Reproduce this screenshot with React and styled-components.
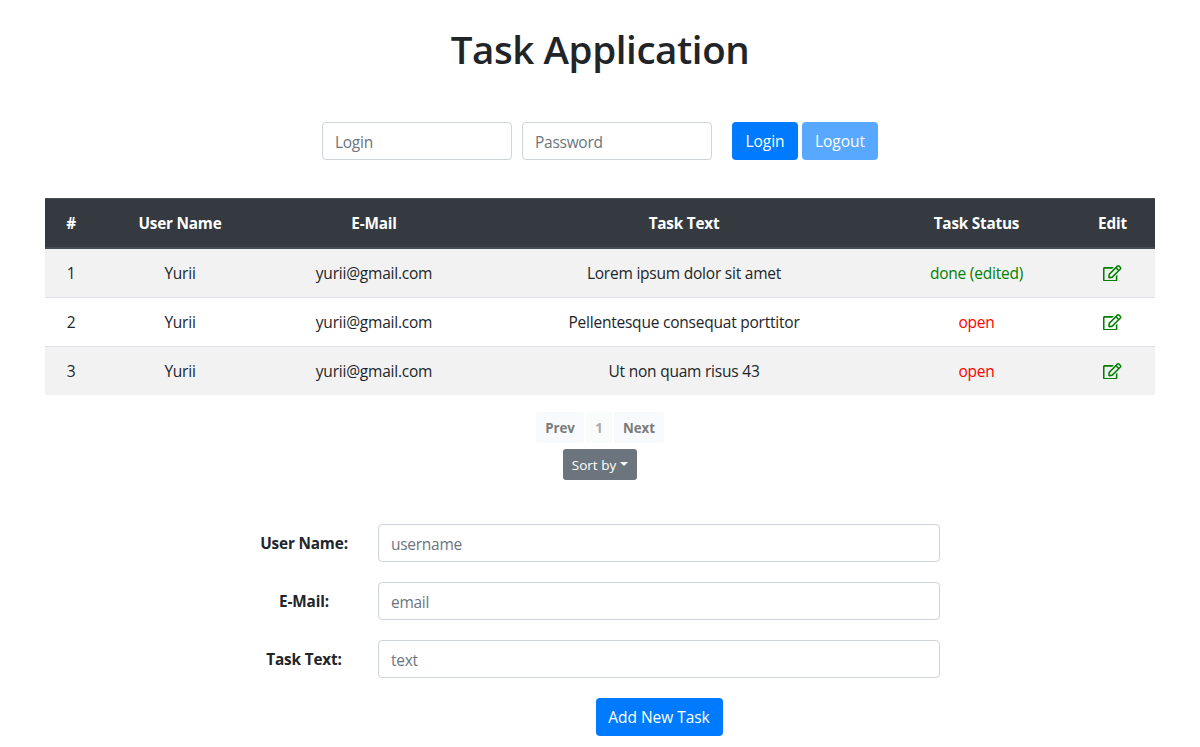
import React from "react";
import styled, { createGlobalStyle } from "styled-components";
import { FaRegEdit } from "react-icons/fa";

const GlobalStyle = createGlobalStyle`
  *, *::before, *::after { box-sizing: border-box; }
  body {
    margin: 0;
    background: #fff;
    color: #212529;
    font-family: "Segoe UI", "Open Sans", "Noto Sans", sans-serif;
    font-size: 15.5px;
    line-height: 24px;
    letter-spacing: -0.22px;
    overflow: hidden;
  }
`;

const Page = styled.main`
  width: 1110px;
  margin: 0 auto;
  padding-top: 25px;
`;

const Title = styled.h1`
  margin: 0 0 49px;
  font-size: 38.5px;
  font-weight: 600;
  line-height: 48px;
  letter-spacing: -0.4px;
  text-align: center;
`;

const Input = styled.input`
  width: ${(p) => p.$width};
  height: 38px;
  padding: 2px 12px 0;
  border: 1px solid #ced4da;
  border-radius: 4px;
  background: #fff;
  color: #495057;
  font: inherit;
  letter-spacing: -0.27px;
  &::placeholder { color: #6c757d; opacity: 1; }
`;

const Button = styled.button`
  width: ${(p) => p.$width}px;
  height: 38px;
  padding: 0;
  border: 0;
  border-radius: 4px;
  background: #007bff;
  color: #fff;
  font: inherit;
  letter-spacing: -0.05px;
  white-space: nowrap;
  opacity: ${(p) => (p.disabled ? 0.65 : 1)};
`;

const LoginBar = styled.form`
  display: flex;
  justify-content: center;
  gap: 10px;
  margin-bottom: 38px;
`;

const LoginActions = styled.div`
  display: flex;
  gap: 4px;
  margin-left: 10px;
`;

const Table = styled.table`
  width: 100%;
  table-layout: fixed;
  border-collapse: separate;
  border-spacing: 0;
  text-align: center;
`;

const HeadCell = styled.th`
  height: 51px;
  padding: 0;
  border-top: 1px solid #454d55;
  border-bottom: 2px solid #454d55;
  background: #343a40;
  color: #fff;
  font-size: 15.3px;
  font-weight: 700;
  letter-spacing: -0.2px;
`;

const Row = styled.tr`
  &:nth-child(odd) { background: #f2f2f2; }
  &:first-child td { height: 48px; border-top: 0; }
`;

const Cell = styled.td`
  height: 49px;
  padding: 0;
  border-top: 1px solid #dee2e6;
  color: ${(p) => p.$color || "inherit"};
  svg { display: block; margin: 0 auto; width: 18.5px; height: 16.5px; }
`;

const Pager = styled.nav`
  display: flex;
  justify-content: center;
  gap: 2px;
  margin: 17px 0 6px;
`;

const PageButton = styled.button`
  width: ${(p) => p.$width}px;
  height: 31px;
  padding: 1px 0 0;
  border: 0;
  border-radius: 3px;
  background: ${(p) => (p.disabled ? "#fafbfb" : "#f8f9fa")};
  color: ${(p) => (p.disabled ? "#aaabab" : "#7a7b7c")};
  font: 700 13.3px/21px "Segoe UI", "Open Sans", "Noto Sans", sans-serif;
  letter-spacing: -0.05px;
`;

const SortButton = styled.button`
  display: flex;
  align-items: center;
  justify-content: center;
  gap: 4px;
  width: 74px;
  height: 31px;
  margin: 0 auto 44px;
  padding: 1px 0 0;
  border: 0;
  border-radius: 3px;
  background: #6c757d;
  color: #fff;
  font: 400 13.5px/21px "Segoe UI", "Open Sans", "Noto Sans", sans-serif;
  letter-spacing: 0;
  &::after {
    content: "";
    margin-top: -3px;
    border-top: 4px solid;
    border-right: 4px solid transparent;
    border-left: 4px solid transparent;
  }
`;

const TaskForm = styled.form`
  display: grid;
  grid-template-columns: 118px 562px;
  column-gap: 15px;
  row-gap: 20px;
  align-items: center;
  width: 695px;
  margin-left: 200px;
`;

const Label = styled.label`
  font-size: 15.3px;
  font-weight: 700;
  letter-spacing: -0.15px;
  text-align: center;
`;

const FormAction = styled.div`
  grid-column: 2;
  display: flex;
  justify-content: center;
`;

const columns = [
  ["#", 52],
  ["User Name", 166],
  ["E-Mail", 222],
  ["Task Text", 398],
  ["Task Status", 187],
  ["Edit", 85],
];

const tasks = [
  { id: 1, text: "Lorem ipsum dolor sit amet", status: "done (edited)", done: true },
  { id: 2, text: "Pellentesque consequat porttitor", status: "open" },
  { id: 3, text: "Ut non quam risus 43", status: "open" },
];

const fields = [
  ["User Name:", "username"],
  ["E-Mail:", "email"],
  ["Task Text:", "text"],
];

export default function App() {
  return (
    <>
      <GlobalStyle />
      <Page>
        <Title>Task Application</Title>
        <LoginBar>
          <Input $width="190px" placeholder="Login" />
          <Input $width="190px" type="password" placeholder="Password" />
          <LoginActions>
            <Button type="button" $width={66}>Login</Button>
            <Button type="button" $width={76} disabled>Logout</Button>
          </LoginActions>
        </LoginBar>
        <Table>
          <colgroup>
            {columns.map(([name, width]) => <col key={name} width={width} />)}
          </colgroup>
          <thead>
            <tr>{columns.map(([name]) => <HeadCell key={name}>{name}</HeadCell>)}</tr>
          </thead>
          <tbody>
            {tasks.map((task) => (
              <Row key={task.id}>
                <Cell>{task.id}</Cell>
                <Cell>Yurii</Cell>
                <Cell>yurii@gmail.com</Cell>
                <Cell>{task.text}</Cell>
                <Cell $color={task.done ? "green" : "red"}>{task.status}</Cell>
                <Cell $color="green"><FaRegEdit /></Cell>
              </Row>
            ))}
          </tbody>
        </Table>
        <Pager>
          <PageButton $width={48}>Prev</PageButton>
          <PageButton $width={26} disabled>1</PageButton>
          <PageButton $width={50}>Next</PageButton>
        </Pager>
        <SortButton>Sort by</SortButton>
        <TaskForm>
          {fields.map(([label, name]) => (
            <React.Fragment key={name}>
              <Label htmlFor={name}>{label}</Label>
              <Input id={name} $width="100%" placeholder={name} />
            </React.Fragment>
          ))}
          <FormAction>
            <Button type="button" $width={127}>Add New Task</Button>
          </FormAction>
        </TaskForm>
      </Page>
    </>
  );
}
